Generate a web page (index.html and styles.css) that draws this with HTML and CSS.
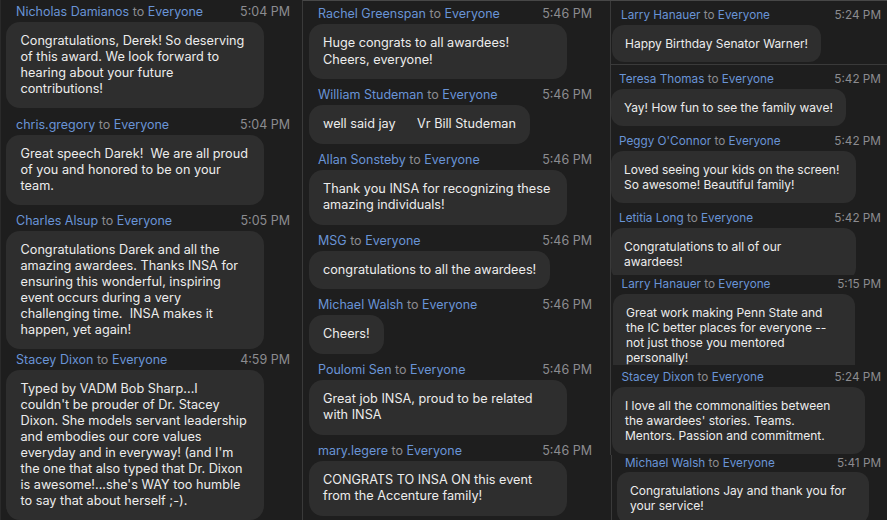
FILE: index.html
```html
<!DOCTYPE html>
<html lang="en">
<head>
    <meta charset="UTF-8">
    <meta name="viewport" content="width=device-width, initial-scale=1.0">
    <title>Chat</title>
    <link rel="stylesheet" href="styles.css">
</head>
<body>
    <div class="chat">

        <div class="col col-left">
            <div class="msg">
                <div class="msg-head"><span><span class="name">Nicholas Damianos</span> to <span class="name">Everyone</span></span><span>5:04 PM</span></div>
                <div class="bubble wide">Congratulations, Derek! So deserving<br>of this award. We look forward to<br>hearing about your future<br>contributions!</div>
            </div>
            <div class="msg">
                <div class="msg-head"><span><span class="name">chris.gregory</span> to <span class="name">Everyone</span></span><span>5:04 PM</span></div>
                <div class="bubble wide">Great speech Darek!  We are all proud<br>of you and honored to be on your<br>team.</div>
            </div>
            <div class="msg">
                <div class="msg-head"><span><span class="name">Charles Alsup</span> to <span class="name">Everyone</span></span><span>5:05 PM</span></div>
                <div class="bubble wide">Congratulations Darek and all the<br>amazing awardees. Thanks INSA for<br>ensuring this wonderful, inspiring<br>event occurs during a very<br>challenging time.  INSA makes it<br>happen, yet again!</div>
            </div>
            <div class="msg seam">
                <div class="msg-head"><span><span class="name">Stacey Dixon</span> to <span class="name">Everyone</span></span><span>4:59 PM</span></div>
                <div class="bubble wide">Typed by VADM Bob Sharp...I<br>couldn't be prouder of Dr. Stacey<br>Dixon. She models servant leadership<br>and embodies our core values<br>everyday and in everyway! (and I'm<br>the one that also typed that Dr. Dixon<br>is awesome!...she's WAY too humble<br>to say that about herself ;-).</div>
            </div>
        </div>

        <div class="col col-mid">
            <div class="msg">
                <div class="msg-head"><span><span class="name">Rachel Greenspan</span> to <span class="name">Everyone</span></span><span>5:46 PM</span></div>
                <div class="bubble wide">Huge congrats to all awardees!<br>Cheers, everyone!</div>
            </div>
            <div class="msg">
                <div class="msg-head"><span><span class="name">William Studeman</span> to <span class="name">Everyone</span></span><span>5:46 PM</span></div>
                <div class="bubble">well said jay      Vr Bill Studeman</div>
            </div>
            <div class="msg">
                <div class="msg-head"><span><span class="name">Allan Sonsteby</span> to <span class="name">Everyone</span></span><span>5:46 PM</span></div>
                <div class="bubble wide">Thank you INSA for recognizing these<br>amazing individuals!</div>
            </div>
            <div class="msg">
                <div class="msg-head"><span><span class="name">MSG</span> to <span class="name">Everyone</span></span><span>5:46 PM</span></div>
                <div class="bubble">congratulations to all the awardees!</div>
            </div>
            <div class="msg">
                <div class="msg-head"><span><span class="name">Michael Walsh</span> to <span class="name">Everyone</span></span><span>5:46 PM</span></div>
                <div class="bubble">Cheers!</div>
            </div>
            <div class="msg">
                <div class="msg-head"><span><span class="name">Poulomi Sen</span> to <span class="name">Everyone</span></span><span>5:46 PM</span></div>
                <div class="bubble wide">Great job INSA, proud to be related<br>with INSA</div>
            </div>
            <div class="msg">
                <div class="msg-head"><span><span class="name">mary.legere</span> to <span class="name">Everyone</span></span><span>5:46 PM</span></div>
                <div class="bubble wide">CONGRATS TO INSA ON this event<br>from the Accenture family!</div>
            </div>
        </div>

        <div class="col col-right">
            <div class="piece piece-a">
                <div class="msg">
                    <div class="msg-head"><span><span class="name">Larry Hanauer</span> to <span class="name">Everyone</span></span><span>5:24 PM</span></div>
                    <div class="bubble">Happy Birthday Senator Warner!</div>
                </div>
            </div>
            <div class="piece piece-b">
                <div class="msg">
                    <div class="msg-head"><span><span class="name">Teresa Thomas</span> to <span class="name">Everyone</span></span><span>5:42 PM</span></div>
                    <div class="bubble">Yay! How fun to see the family wave!</div>
                </div>
                <div class="msg">
                    <div class="msg-head"><span><span class="name">Peggy O'Connor</span> to <span class="name">Everyone</span></span><span>5:42 PM</span></div>
                    <div class="bubble wide">Loved seeing your kids on the screen!<br>So awesome! Beautiful family!</div>
                </div>
                <div class="msg">
                    <div class="msg-head"><span><span class="name">Letitia Long</span> to <span class="name">Everyone</span></span><span>5:42 PM</span></div>
                    <div class="bubble wide">Congratulations to all of our<br>awardees!</div>
                </div>
            </div>
            <div class="piece piece-c">
                <div class="msg">
                    <div class="msg-head"><span><span class="name">Larry Hanauer</span> to <span class="name">Everyone</span></span><span>5:15 PM</span></div>
                    <div class="bubble wide">Great work making Penn State and<br>the IC better places for everyone --<br>not just those you mentored<br>personally!</div>
                </div>
            </div>
            <div class="piece piece-d">
                <div class="msg">
                    <div class="msg-head"><span><span class="name">Stacey Dixon</span> to <span class="name">Everyone</span></span><span>5:24 PM</span></div>
                    <div class="bubble wide">I love all the commonalities between<br>the awardees' stories. Teams.<br>Mentors. Passion and commitment.</div>
                </div>
            </div>
            <div class="piece piece-e">
                <div class="msg">
                    <div class="msg-head"><span><span class="name">Michael Walsh</span> to <span class="name">Everyone</span></span><span>5:41 PM</span></div>
                    <div class="bubble wide">Congratulations Jay and thank you for<br>your service!</div>
                </div>
            </div>
        </div>

    </div>
</body>
</html>
```
FILE: styles.css
```css
body { margin: 0; background: #1e1e1e; color: #ececec; font-family: Inter, "Noto Sans", sans-serif; }
.chat { display: flex; height: 520px; overflow: hidden; }
.col { flex: none; box-sizing: border-box; overflow: hidden; }

.msg-head { display: flex; justify-content: space-between; font-size: 12.5px; line-height: 20px; color: #8c8c90; white-space: nowrap; }
.name { color: #6994d6; }
.bubble { width: fit-content; box-sizing: border-box; background: #2e2e2e; border-radius: 14px; font-size: 12.7px; line-height: 16px; padding: 11px 14.5px; white-space: pre-wrap; }

/* left column */
.col-left { width: 302px; border-left: 1px solid #2a2a2a; padding: 2px 0 0 5px; }
.col-left .msg-head { padding: 0 12px 0 10px; }
.col-left .msg + .msg { margin-top: 6.5px; }
.col-left .msg.seam { margin-top: 1px; }
.col-left .wide { width: 258px; }

/* middle column */
.col-mid { width: 307px; border-left: 1px solid #3a3a3a; border-top: 1px solid #474747; padding: 3px 0 0 6px; }
.col-mid .msg-head { padding: 0 17px 0 9px; }
.col-mid .msg + .msg { margin-top: 6px; }
.col-mid .bubble { line-height: 16.5px; padding: 11px 14px; }
.col-mid .wide { width: 258px; }

/* right column, pasted from several pieces */
.col-right { flex: 1; display: flex; flex-direction: column; border-top: 1px solid #474747; }
.piece { flex: none; box-sizing: border-box; margin-left: 1px; padding-right: 6px; border-left: 1px solid #3a3a3a; overflow: hidden; }
.piece .msg-head { font-size: 11.75px; line-height: 19px; padding-left: 8px; }
.piece .msg + .msg { margin-top: 6px; }
.piece .bubble { font-size: 12px; line-height: 15px; padding: 11px 13px; border-radius: 12px; }

.piece-a { height: 64px; padding-top: 5px; padding-left: 1px; border-bottom: 1px solid #3a3a3a; }
.piece-a .msg-head { padding-left: 9px; }
.piece-b { height: 210px; padding-top: 4.5px; }
.piece-b .wide { width: 245px; }
.piece-c { height: 90px; padding-left: 2px; }
.piece-c .msg-head { padding-left: 8.5px; }
.piece-c .wide { width: 242px; }
.piece-d { height: 90px; padding-top: 3px; padding-left: 1px; }
.piece-d .msg-head { padding-left: 9.5px; }
.piece-d .wide { width: 253px; }
.piece-e { flex: 1; margin-left: 2px; padding-left: 5px; }
.piece-e .msg-head { line-height: 17px; padding-left: 8px; }
.piece-e .wide { width: 252px; }
```
